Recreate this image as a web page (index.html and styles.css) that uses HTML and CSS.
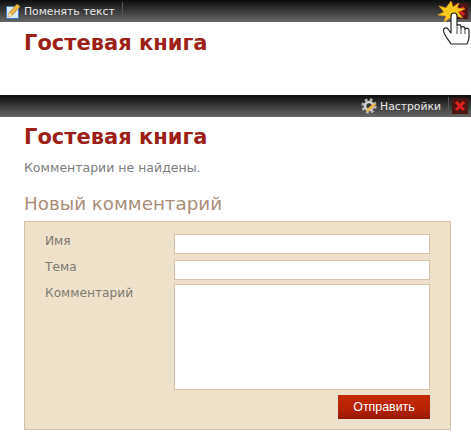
FILE: index.html
```html
<!DOCTYPE html>
<html lang="ru">
<head>
    <meta charset="UTF-8">
    <meta name="viewport" content="width=device-width, initial-scale=1.0">
    <title>Гостевая книга</title>
    <link rel="stylesheet" href="styles.css">
</head>
<body>
    <div class="toolbar toolbar-top">
        <svg class="icon" width="16" height="16" viewBox="0 0 16 16">
            <rect x="1.500" y="3.500" width="12" height="12" fill="#dfeaf7" stroke="#3f7fc4"/>
            <path d="M3 14l1-4 8-9 3 2.500-8 9z" fill="#f0b94a" stroke="#a8782c" stroke-width=".7"/>
            <path d="M3 14l1-4 3 2.500z" fill="#f7e6c0"/>
        </svg>
        <span class="tool-label">Поменять текст</span>
        <span class="divider"></span>
        <span class="close-btn close-top">
            <svg width="12" height="12" viewBox="0 0 12 12">
                <path d="M2 2l8 8M10 2l-8 8" stroke="#d8201c" stroke-width="3"/>
            </svg>
        </span>
    </div>

    <div class="preview">
        <h1>Гостевая книга</h1>
    </div>

    <div class="toolbar toolbar-edit">
        <svg class="icon" width="16" height="16" viewBox="0 0 16 16">
            <circle cx="8" cy="8" r="6.200" fill="none" stroke="#b5b5b5" stroke-width="3" stroke-dasharray="2.600 2.270"/>
            <circle cx="8" cy="8" r="4" fill="none" stroke="#cfcfcf" stroke-width="2.600"/>
            <path d="M5 14l1-3 7-6 2 2-7 6z" fill="#e8b64c"/>
        </svg>
        <span class="tool-label">Настройки</span>
        <span class="divider"></span>
        <span class="close-btn">
            <svg width="12" height="12" viewBox="0 0 12 12">
                <path d="M2 2l8 8M10 2l-8 8" stroke="#e0201c" stroke-width="3"/>
            </svg>
        </span>
    </div>

    <div class="content">
        <h1>Гостевая книга</h1>
        <p class="empty">Комментарии не найдены.</p>
        <h2>Новый комментарий</h2>
        <form class="comment-form">
            <div class="row">
                <label for="name">Имя</label>
                <input type="text" id="name">
            </div>
            <div class="row">
                <label for="subject">Тема</label>
                <input type="text" id="subject">
            </div>
            <div class="row row-text">
                <label for="comment">Комментарий</label>
                <textarea id="comment"></textarea>
            </div>
            <div class="actions">
                <button type="button">Отправить</button>
            </div>
        </form>
    </div>

    <!-- курсор поверх кнопки -->
    <svg class="pointer" width="35" height="46" viewBox="0 0 35 46">
        <path d="M15 1l2 6 6-4-2 5 8 1-7 3 5 6-7-2-2 7-4-5-6 4 2-6-8-1 6-3-5-6 7 2z" fill="#f8ca1c" stroke="#ea9c12" stroke-width=".6"/>
        <path d="M15 44c-3-5-7-9-7.500-13-.5-3 2.500-4 4.500-2l3 4V16c0-4 6-4 6 0v10c0-2 4-2 4 .5V28c0-2 4-2 4 .5v1c0-2 4-2 4 .5v7c0 3-1 5-2 7z" fill="#fff" stroke="#222" stroke-width="1.200" stroke-linejoin="round"/>
        <path d="M21 27v7M25 28v6M29 29.500V34" stroke="#444"/>
    </svg>
</body>
</html>
```

FILE: styles.css
```css
* {
    box-sizing: border-box;
}
body {
    margin: 0;
    background-color: #fff;
    font-family: "DejaVu Sans", Verdana, sans-serif;
    color: #7d7d7d;
    overflow: hidden;
}
.toolbar {
    display: flex;
    align-items: center;
    height: 22px;
    background: linear-gradient(#0d0d0d, #666);
    color: #e8e8e8;
    font-size: 10.800px;
}
.toolbar-top {
    padding: 0 3px 0 5px;
}
.toolbar-edit {
    justify-content: flex-end;
    padding-right: 3px;
}
.icon {
    margin-right: 3px;
    flex-shrink: 0;
}
.divider {
    width: 1px;
    height: 18px;
    margin-left: 7px;
    background-color: #555;
}
.toolbar-edit .divider {
    margin-right: 3px;
}
.close-btn {
    display: flex;
    align-items: center;
    justify-content: center;
    width: 16px;
    height: 16px;
    background-color: #4a1512;
}
.close-top {
    margin-left: auto;
}
.preview {
    height: 73px;
    padding: 9px 24px 0;
}
h1 {
    margin: 0;
    font-size: 21px;
    line-height: 24px;
    font-weight: bold;
    color: #9c1f18;
}
.content {
    padding: 8px 20px 0 24px;
}
.empty {
    margin: 11px 0 0;
    font-size: 12.500px;
    line-height: 16px;
}
h2 {
    margin: 16px 0 0;
    font-size: 18.300px;
    line-height: 24px;
    font-weight: normal;
    color: #a98d79;
}
.comment-form {
    margin-top: 5px;
    height: 209px;
    padding: 12px 20px 0 20px;
    background-color: #ede1cc;
    border: 1px solid #d4c3a5;
}
.row {
    display: flex;
    margin-bottom: 6px;
}
.row:nth-child(2) {
    margin-bottom: 4px;
}
label {
    width: 129px;
    flex-shrink: 0;
    padding-top: 1px;
    font-size: 12.200px;
    line-height: 12px;
    color: #7d7a72;
}
.row-text label {
    padding-top: 3px;
}
input,
textarea {
    display: block;
    width: 256px;
    height: 20px;
    padding: 2px;
    background-color: #fff;
    border: 1px solid #d4c3a5;
    border-radius: 0;
    resize: none;
}
textarea {
    height: 106px;
}
.row-text {
    margin-bottom: 5px;
}
.actions {
    display: flex;
    justify-content: flex-end;
}
button {
    width: 92px;
    height: 24px;
    padding: 0;
    border: none;
    background: linear-gradient(#c42803 0%, #b92304 50%, #9a1705 100%);
    color: #fff;
    font-family: "Liberation Sans", Arial, sans-serif;
    font-size: 12.400px;
    cursor: pointer;
}
.pointer {
    position: absolute;
    left: 436px;
    top: 0;
}
```
